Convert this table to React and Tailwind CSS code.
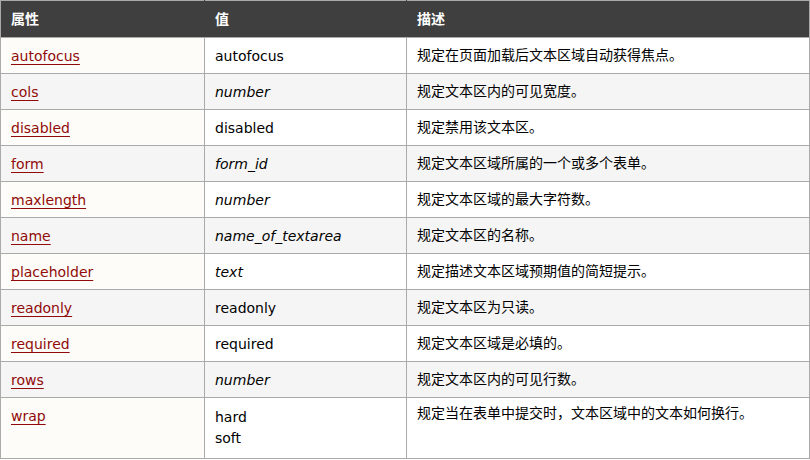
import React from "react";

const rows = [
  ["autofocus", "autofocus", false, "规定在页面加载后文本区域自动获得焦点。"],
  ["cols", "number", true, "规定文本区内的可见宽度。"],
  ["disabled", "disabled", false, "规定禁用该文本区。"],
  ["form", "form_id", true, "规定文本区域所属的一个或多个表单。"],
  ["maxlength", "number", true, "规定文本区域的最大字符数。"],
  ["name", "name_of_textarea", true, "规定文本区的名称。"],
  ["placeholder", "text", true, "规定描述文本区域预期值的简短提示。"],
  ["readonly", "readonly", false, "规定文本区为只读。"],
  ["required", "required", false, "规定文本区域是必填的。"],
  ["rows", "number", true, "规定文本区内的可见行数。"],
];

const font = { fontFamily: '"DejaVu Sans", Verdana, "Noto Sans CJK SC", sans-serif' };

export default function App() {
  return (
    <div className="w-[810px] h-[460px] bg-white text-black text-[14px]" style={font}>
      <table className="border-collapse w-[810px] table-fixed">
        <colgroup>
          <col className="w-[204px]" />
          <col className="w-[202px]" />
          <col />
        </colgroup>
        <thead>
          <tr className="bg-[#3f3f3f] text-white">
            <th className="border border-[#aaaaaa] border-r-[#3f3f3f] text-left font-bold pl-[10px] h-[37px] pt-0 pb-[1px] leading-[22px]">属性</th>
            <th className="border border-[#aaaaaa] border-x-[#3f3f3f] text-left font-bold pl-[10px] pt-0 pb-[1px] leading-[22px]">值</th>
            <th className="border border-[#aaaaaa] border-l-[#3f3f3f] text-left font-bold pl-[10px] pt-0 pb-[1px] leading-[22px]">描述</th>
          </tr>
        </thead>
        <tbody>
          {rows.map(([a, v, it, d], i) => {
            const even = i % 2 === 1;
            return (
              <tr key={a} className={even ? "bg-[#f5f5f5]" : "bg-white"}>
                <td className={"border border-[#aaaaaa] pl-[10px] pt-[7px] pb-[6px] leading-[22px] align-top " + (even ? "bg-[#f5f5f5]" : "bg-[#fdfcf8]")}>
                  <a href="#" className="text-[#900b09] underline underline-offset-[3px] decoration-1">{a}</a>
                </td>
                <td className={"border border-[#aaaaaa] pl-[10px] pt-[7px] pb-[6px] leading-[22px] align-top " + (it ? "italic" : "")}>{v}</td>
                <td className="border border-[#aaaaaa] pl-[10px] pt-[6px] pb-[7px] leading-[22px] align-top">{d}</td>
              </tr>
            );
          })}
          <tr className="bg-white">
            <td className="border border-[#aaaaaa] pl-[10px] pt-[7px] pb-[6px] leading-[22px] align-top h-[61px] bg-[#fdfcf8]">
              <a href="#" className="text-[#900b09] underline underline-offset-[3px] decoration-1">wrap</a>
            </td>
            <td className="border border-[#aaaaaa] pl-[10px] py-0 leading-[21px] align-middle">
              <div>hard</div>
              <div>soft</div>
            </td>
            <td className="border border-[#aaaaaa] pl-[10px] pt-[4px] pb-[7px] leading-[22px] align-top">规定当在表单中提交时，文本区域中的文本如何换行。</td>
          </tr>
        </tbody>
      </table>
    </div>
  );
}
